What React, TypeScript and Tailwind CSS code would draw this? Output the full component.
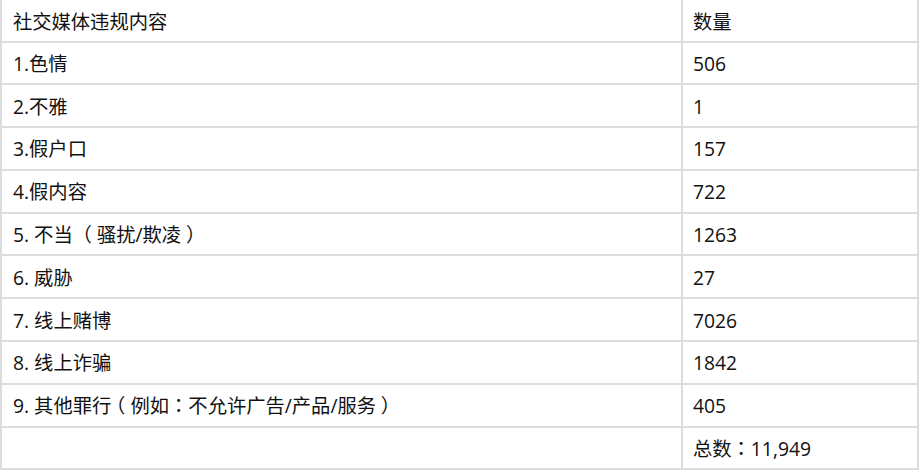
import React from "react";

const rows: [string, string][] = [
  ["1.色情", "506"],
  ["2.不雅", "1"],
  ["3.假户口", "157"],
  ["4.假内容", "722"],
  ["5. 不当 （骚扰/欺凌）", "1263"],
  ["6. 威胁", "27"],
  ["7. 线上赌博", "7026"],
  ["8. 线上诈骗", "1842"],
  ["9. 其他罪行（例如：不允许广告/产品/服务）", "405"],
  ["", "总数：11,949"],
];

function Txt({ s }: { s: string }) {
  const parts: React.ReactNode[] = [];
  let buf = "";
  let k = 0;
  const flush = () => {
    if (buf) {
      parts.push(<span key={k++}>{buf}</span>);
      buf = "";
    }
  };
  for (const ch of s) {
    if (ch === "（") {
      flush();
      parts.push(
        <span key={k++} className="[font-feature-settings:'halt'] pl-[0.23em] pr-[0.27em]">
          （
        </span>
      );
    } else if (ch === "）") {
      flush();
      parts.push(
        <span key={k++} className="[font-feature-settings:'halt'] pl-[0.25em] pr-[0.25em]">
          ）
        </span>
      );
    } else if (ch === "：") {
      flush();
      parts.push(
        <span key={k++} className="font-['Noto_Sans_CJK_TC',sans-serif]">
          ：
        </span>
      );
    } else {
      buf += ch;
    }
  }
  flush();
  return <>{parts}</>;
}

export default function App() {
  return (
    <div
      className="w-[920px] h-[472px] bg-white text-[#111111] text-[19.3px] leading-none"
      style={{ fontFamily: '"Open Sans", "Noto Sans CJK SC", sans-serif' }}
    >
      <div className="w-[919px] border-l-2 border-r-2 border-[#dddddd] flex flex-col">
        <div className="h-[42.5px] flex border-b-2 border-[#dddddd]">
          <div className="w-[681px] border-r-2 border-[#dddddd] flex items-center pl-[11px] pt-[2px] whitespace-pre">
            社交媒体违规内容
          </div>
          <div className="flex-1 flex items-center pl-[10px] pt-[2px]">数量</div>
        </div>
        {rows.map(([a, b], i) => (
          <div key={i} className="h-[42.8px] flex border-b-2 border-[#dddddd]">
            <div className="w-[681px] border-r-2 border-[#dddddd] flex items-center pl-[11px] pt-[1px] whitespace-pre">
              <Txt s={a} />
            </div>
            <div className="flex-1 flex items-center pl-[10px] pt-[1px] whitespace-pre">
              <Txt s={b} />
            </div>
          </div>
        ))}
      </div>
    </div>
  );
}
